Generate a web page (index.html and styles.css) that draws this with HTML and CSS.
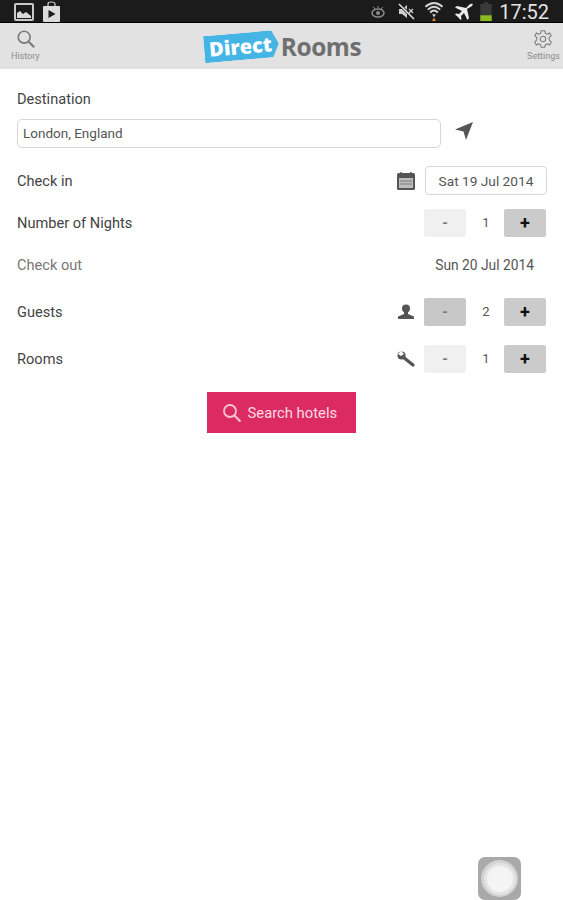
FILE: index.html
```html
<!DOCTYPE html>
<html lang="en">
<head>
<meta charset="UTF-8">
<meta name="viewport" content="width=device-width, initial-scale=1.0">
<title>Direct Rooms</title>
<link rel="stylesheet" href="styles.css">
</head>
<body>
  <!-- Android status bar -->
  <div class="status-bar">
    <div class="status-left">
      <svg width="20" height="18" viewBox="0 0 20 18">
        <rect x="1" y="1" width="18" height="16" rx="1" fill="#1b1b1b" stroke="#c9c9c9" stroke-width="2"/>
        <path d="M3 14 L3 10 L6 8 L9 11 L12 9 L17 13 L17 15 L3 15 Z" fill="#d8d8d8"/>
      </svg>
      <svg width="19" height="21" viewBox="0 0 19 21">
        <path d="M6 6 V3 Q6 1 9.500 1 Q13 1 13 3 V6" fill="none" stroke="#d0d0d0" stroke-width="1.200"/>
        <rect x="1" y="5" width="17" height="16" rx="1" fill="#dcdcdc"/>
        <path d="M6.500 9 L13.500 13 L6.500 17 Z" fill="#1b1b1b"/>
      </svg>
    </div>
    <div class="status-right">
      <svg class="icon-eye" width="16" height="12" viewBox="0 0 16 12">
        <ellipse cx="8" cy="7" rx="6" ry="4" fill="none" stroke="#8a8a8a" stroke-width="1.500"/>
        <circle cx="8" cy="7" r="2" fill="#8a8a8a"/>
        <path d="M3 1 L5 3 M13 1 L11 3 M8 0 V2" stroke="#8a8a8a" stroke-width="1"/>
      </svg>
      <svg class="icon-mute" width="17" height="17" viewBox="0 0 17 17">
        <path d="M1 6 H4 L9 2 V15 L4 11 H1 Z" fill="#cfcfcf"/>
        <path d="M1 1 L16 16" stroke="#1b1b1b" stroke-width="3"/>
        <path d="M1 1 L16 16" stroke="#e4e4e4" stroke-width="1.500"/>
        <path d="M11 6 L15 10 M15 6 L11 10" stroke="#cfcfcf" stroke-width="1.200"/>
      </svg>
      <svg class="icon-wifi" width="20" height="21" viewBox="0 0 20 22">
        <path d="M1 6 Q10 -2 19 6 M3.500 9 Q10 3 16.500 9 M6 12 Q10 8 14 12" fill="none" stroke="#d6d6d6" stroke-width="2"/>
        <path d="M8 14 L10 17 L12 14 Z" fill="#d6d6d6"/>
        <path d="M10 17 L8 21 H12 Z" fill="#d9822b"/>
      </svg>
      <svg class="icon-plane" width="20" height="18" viewBox="0 0 20 18">
        <path d="M19 1 Q17 0 15 2 L12 5 L3 3 L1 4.500 L8 8 L5 11 L2 10.500 L1 11.500 L4 14 L6.500 17 L7.500 16 L7 13 L10 10 L13.500 17 L15 15 L13 6 L18 3 Z" fill="#ececec"/>
      </svg>
      <svg class="icon-battery" width="14" height="19" viewBox="0 0 14 20">
        <path d="M5 0 H9 V2 H13 V20 H1 V2 H5 Z" fill="#3a3a3a"/>
        <rect x="1" y="14" width="12" height="6" fill="#8cbb1f"/>
      </svg>
      <span class="clock">17:52</span>
    </div>
  </div>
  <div class="status-line"></div>

  <!-- App header -->
  <header class="app-header">
    <div class="header-action">
      <svg width="20" height="20" viewBox="0 0 22 22">
        <circle cx="9" cy="9" r="6.500" fill="none" stroke="#7b7b7b" stroke-width="1.800"/>
        <path d="M14 14 L20 20" stroke="#7b7b7b" stroke-width="2.400"/>
      </svg>
      <span>History</span>
    </div>
    <div class="logo">
      <span class="logo-direct">Direct</span>
      <span class="logo-rooms">Rooms</span>
    </div>
    <div class="header-action">
      <svg width="20" height="20" viewBox="0 0 22 22">
        <path d="M9 2 H13 L13.600 4.800 L15.800 5.800 L18.300 4.300 L20 7.500 L17.800 9.200 V11.800 L20 14.500 L18.300 17.700 L15.800 16.200 L13.600 17.200 L13 20 H9 L8.400 17.200 L6.200 16.200 L3.700 17.700 L2 14.500 L4.200 11.800 V9.200 L2 7.500 L3.700 4.300 L6.200 5.800 L8.400 4.800 Z" fill="none" stroke="#7b7b7b" stroke-width="1.200" stroke-linejoin="round"/>
        <circle cx="11" cy="11" r="3" fill="none" stroke="#7b7b7b" stroke-width="1.200"/>
      </svg>
      <span>Settings</span>
    </div>
  </header>

  <!-- Search form -->
  <main class="form">
    <label class="dest-label" for="destination">Destination</label>
    <div class="dest-row">
      <input class="dest-input" id="destination" type="text" value="London, England">
      <svg class="locate-icon" width="20" height="20" viewBox="0 0 20 20">
        <path d="M19 1 L1 8.500 L9.500 10.500 L12 19 Z" fill="#555"/>
      </svg>
    </div>

    <div class="row row-checkin">
      <span class="row-label">Check in</span>
      <div class="row-controls">
        <svg width="20" height="20" viewBox="0 0 20 20">
          <rect x="1" y="2" width="18" height="17" rx="1.500" fill="#555"/>
          <rect x="3" y="7" width="14" height="10" fill="#bdbdbd"/>
          <path d="M4 10 H16 M4 13 H16" stroke="#7d7d7d" stroke-width="1"/>
          <path d="M5 1 V4 M15 1 V4" stroke="#555" stroke-width="1.500"/>
        </svg>
        <button class="date-btn" type="button">Sat 19 Jul 2014</button>
      </div>
    </div>

    <div class="row row-nights">
      <span class="row-label">Number of Nights</span>
      <div class="row-controls">
        <div class="stepper">
          <button class="step step-off" type="button">-</button>
          <span class="step-value">1</span>
          <button class="step step-on" type="button">+</button>
        </div>
      </div>
    </div>

    <div class="row row-checkout">
      <span class="row-label muted">Check out</span>
      <span class="checkout-date">Sun 20 Jul 2014</span>
    </div>

    <div class="row row-guests">
      <span class="row-label">Guests</span>
      <div class="row-controls">
        <svg width="18" height="16" viewBox="0 0 18 16">
          <circle cx="9" cy="4.500" r="4" fill="#555"/>
          <path d="M7 8 H11 V10 L17 12.500 V15 H1 V12.500 L7 10 Z" fill="#555"/>
        </svg>
        <div class="stepper">
          <button class="step step-mid" type="button">-</button>
          <span class="step-value">2</span>
          <button class="step step-on" type="button">+</button>
        </div>
      </div>
    </div>

    <div class="row row-rooms">
      <span class="row-label">Rooms</span>
      <div class="row-controls">
        <svg width="18" height="16" viewBox="0 0 18 16">
          <circle cx="4.500" cy="4.500" r="4" fill="#555"/>
          <path d="M4 0 L7 3 L4 5 L1 3 Z" fill="#fff"/>
          <path d="M6 6 L16 14" stroke="#555" stroke-width="3.200" stroke-linecap="round"/>
        </svg>
        <div class="stepper">
          <button class="step step-off" type="button">-</button>
          <span class="step-value">1</span>
          <button class="step step-on" type="button">+</button>
        </div>
      </div>
    </div>

    <button class="search-btn" type="button">
      <svg width="20" height="20" viewBox="0 0 20 20">
        <circle cx="8" cy="8" r="6" fill="none" stroke="#f6c4d4" stroke-width="1.800"/>
        <path d="M12.500 12.500 L18.500 18.500" stroke="#f6c4d4" stroke-width="2.200"/>
      </svg>
      <span>Search hotels</span>
    </button>
  </main>

  <!-- Floating assistive button -->
  <div class="assist-btn"><div class="assist-ring"><div class="assist-core"></div></div></div>
</body>
</html>
```

FILE: styles.css
```css
html, body {
  margin: 0;
  padding: 0;
}

body {
  position: relative;
  width: 563px;
  height: 900px;
  overflow: hidden;
  background-color: #FFFFFF;
  color: #444444;
  font-family: Roboto, "Liberation Sans", sans-serif;
}

/* Status bar */
.status-bar {
  height: 21px;
  padding: 1px 14px 0 14px;
  background-color: #1b1b1b;
  display: flex;
  justify-content: space-between;
  align-items: center;
}

.status-left, .status-right {
  display: flex;
  align-items: center;
}

.status-left {
  gap: 8px;
}

.icon-mute {
  margin-left: 12px;
}

.icon-wifi {
  margin-left: 9px;
}

.icon-plane {
  margin-left: 10px;
}

.icon-battery {
  margin-left: 5px;
}

.clock {
  margin-left: 6px;
  color: #e4e4e4;
  font-size: 20px;
  line-height: 21px;
  padding-top: 2px;
}

.status-line {
  height: 1px;
  background-color: #000000;
}

/* Header */
.app-header {
  height: 46px;
  padding: 0 3px 0 11px;
  background-color: #e2e2e2;
  display: flex;
  justify-content: space-between;
  align-items: center;
}

.header-action {
  width: 33px;
  display: flex;
  flex-direction: column;
  align-items: center;
  color: #8c8c8c;
  font-size: 9px;
  line-height: 11px;
}

.header-action:first-child {
  align-items: flex-start;
}

.header-action:first-child svg {
  margin-left: 5px;
}

.header-action svg {
  margin-bottom: 2px;
  margin-top: -2px;
}

.logo {
  display: flex;
  align-items: center;
  margin-left: -6px;
}

.logo-direct {
  padding: 2px 7px 2px 5px;
  background-color: #45b5e6;
  color: #FFFFFF;
  font-family: "Open Sans", sans-serif;
  font-size: 20px;
  font-weight: 800;
  line-height: 23px;
  transform: rotate(-5deg);
  clip-path: polygon(0 0, 91% 0, 100% 50%, 91% 100%, 0 100%);
}

.logo-rooms {
  margin-left: 2px;
  color: #6f6f6f;
  font-family: "Open Sans", sans-serif;
  font-size: 24.5px;
  font-weight: 700;
  letter-spacing: -0.5px;
}

/* Form */
.form {
  padding: 0 17px;
  display: flex;
  flex-direction: column;
  font-size: 14.6px;
}

.dest-label {
  margin-top: 22px;
  line-height: 17px;
}

.dest-row {
  margin-top: 11px;
  display: flex;
  align-items: center;
  gap: 13px;
}

.locate-icon {
  margin-bottom: 5px;
}

.dest-input {
  width: 424px;
  height: 29px;
  box-sizing: border-box;
  padding: 0 5px 2px;
  border: 1px solid #d6d6d6;
  border-radius: 5px;
  color: #555555;
  font-family: inherit;
  font-size: 13.5px;
}

.row {
  display: flex;
  justify-content: space-between;
  align-items: center;
  height: 29px;
}

.row-checkin {
  margin-top: 18px;
}

.row-nights {
  margin-top: 13px;
}

.row-checkout {
  margin-top: 13px;
}

.row-guests {
  margin-top: 18px;
}

.row-rooms {
  margin-top: 18px;
}

.row-label {
  padding-top: 1px;
}

.row-label.muted {
  color: #777777;
}

.row-controls {
  display: flex;
  align-items: center;
  gap: 9px;
}

.date-btn {
  width: 122px;
  height: 29px;
  margin-right: -1px;
  padding: 0;
  border: 1px solid #d6d6d6;
  border-radius: 4px;
  background-color: #FFFFFF;
  color: #555555;
  font-family: inherit;
  font-size: 13.7px;
}

.checkout-date {
  margin-right: 12px;
  color: #555555;
  font-size: 13.8px;
}

.stepper {
  display: flex;
  align-items: center;
}

.step {
  width: 42px;
  height: 28px;
  padding: 0;
  border: none;
  border-radius: 2px;
  font-family: inherit;
  font-weight: 700;
}

.step-off {
  background-color: #f0f0f0;
  color: #777777;
  font-size: 14px;
}

.step-mid {
  background-color: #c8c8c8;
  color: #777777;
  font-size: 14px;
}

.step-on {
  background-color: #cbcbcb;
  color: #111111;
  font-size: 18px;
}

.step-value {
  width: 38px;
  box-sizing: border-box;
  padding-left: 2px;
  text-align: center;
  color: #555555;
  font-size: 13px;
}

.search-btn {
  align-self: center;
  width: 149px;
  height: 41px;
  margin-top: 19px;
  margin-right: 1px;
  padding: 0 0 0 15px;
  border: none;
  background-color: #db2b62;
  color: #fbdce6;
  font-family: inherit;
  font-size: 14.8px;
  font-weight: 400;
  display: flex;
  align-items: center;
  gap: 6px;
}

/* Floating button sits over the page */
.assist-btn {
  position: absolute;
  left: 478px;
  top: 857px;
  width: 43px;
  height: 43px;
  border-radius: 7px;
  background-color: #a9a9a9;
  display: flex;
  justify-content: center;
  align-items: center;
}

.assist-ring {
  width: 37px;
  height: 37px;
  border-radius: 50%;
  background-color: #d2d2d2;
  display: flex;
  justify-content: center;
  align-items: center;
}

.assist-core {
  width: 26px;
  height: 26px;
  border: 3px solid #e4e4e4;
  border-radius: 50%;
  background-color: #f4f4f4;
}
```
